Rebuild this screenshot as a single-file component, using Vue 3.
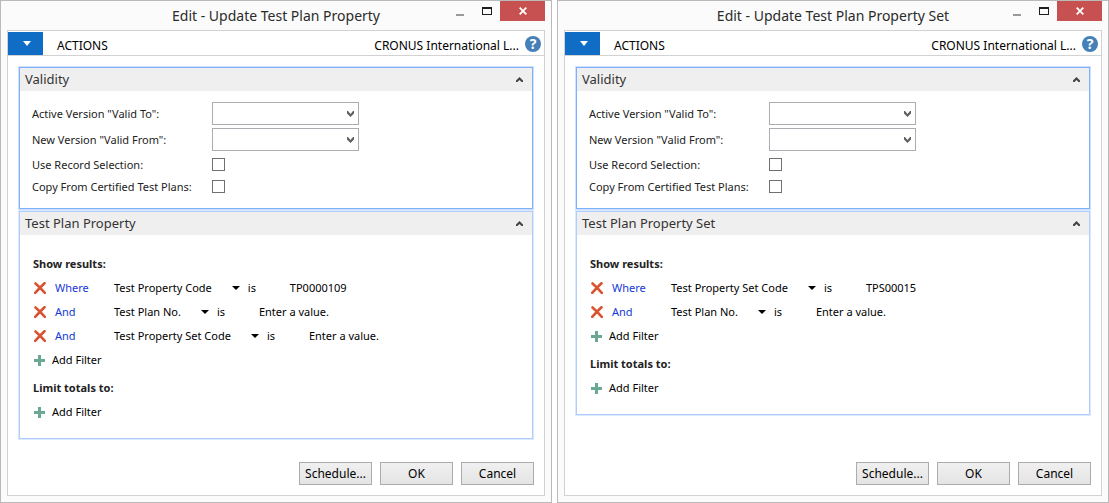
<script setup>
const dialogs = [
  {
    id: 'property',
    title: 'Edit - Update Test Plan Property',
    section: 'Test Plan Property',
    filters: [
      { join: 'Where', field: 'Test Property Code', value: 'TP0000109' },
      { join: 'And', field: 'Test Plan No.', value: 'Enter a value.' },
      { join: 'And', field: 'Test Property Set Code', value: 'Enter a value.' },
    ],
  },
  {
    id: 'set',
    title: 'Edit - Update Test Plan Property Set',
    section: 'Test Plan Property Set',
    filters: [
      { join: 'Where', field: 'Test Property Set Code', value: 'TPS00015' },
      { join: 'And', field: 'Test Plan No.', value: 'Enter a value.' },
    ],
  },
]
const dates = [
  { id: 'to', label: 'Active Version "Valid To":' },
  { id: 'from', label: 'New Version "Valid From":' },
]
const checks = [
  { id: 'record', label: 'Use Record Selection:' },
  { id: 'copy', label: 'Copy From Certified Test Plans:' },
]
const totals = ['Show results:', 'Limit totals to:']
</script>

<template>
  <main class="desktop">
    <section v-for="d in dialogs" :key="d.id" class="window">
      <header class="titlebar">
        <h1 class="title">{{ d.title }}</h1>
        <div class="controls">
          <button class="ctl" type="button" aria-label="Minimize">
            <svg width="8" height="20" viewBox="0 0 8 20"><path d="M0 13h8v2H0z" fill="#999" /></svg>
          </button>
          <button class="ctl" type="button" aria-label="Maximize">
            <svg width="10" height="20" viewBox="0 0 10 20"><path d="M0 6h10v8H0zM1 8v5h8V8z" fill="#1e1e1e" fill-rule="evenodd" /></svg>
          </button>
          <button class="ctl close" type="button" aria-label="Close">
            <svg width="8" height="8" viewBox="0 0 8 8"><path d="M0.7 0.7l6.6 6.6M7.3 0.7L0.7 7.3" stroke="#fff" stroke-width="1.8" /></svg>
          </button>
        </div>
      </header>

      <div class="client">
        <nav class="toolbar">
          <button class="menu" type="button" aria-label="Menu">
            <svg width="8" height="5" viewBox="0 0 8 5"><path d="M0 0h8L4 5z" fill="#fff" /></svg>
          </button>
          <button class="actions" type="button">ACTIONS</button>
          <span class="company">CRONUS International L...</span>
          <button class="help" type="button" aria-label="Help">?</button>
        </nav>

        <div class="panels">
          <section class="panel active">
            <header class="panel-head">
              <h2>Validity</h2>
              <button class="fold" type="button" aria-label="Collapse">
                <svg width="7" height="5" viewBox="0 0 7 5"><path d="M0 3.5L3.5 0L7 3.5V5H5.5L3.5 3L1.5 5H0z" fill="#444" /></svg>
              </button>
            </header>
            <div class="fields">
              <div v-for="f in dates" :key="f.id" class="field">
                <label :for="d.id + f.id">{{ f.label }}</label>
                <div class="combo">
                  <select :id="d.id + f.id"><option value=""></option></select>
                  <svg class="drop" width="7" height="6" viewBox="0 0 7 6"><path d="M0 0H1L3.5 3L6 0H7V2.5L3.5 6L0 2.5z" fill="#606060" /></svg>
                </div>
              </div>
              <div class="checks">
                <div v-for="f in checks" :key="f.id" class="field check">
                  <label :for="d.id + f.id">{{ f.label }}</label>
                  <input :id="d.id + f.id" type="checkbox" />
                </div>
              </div>
            </div>
          </section>

          <section class="panel">
            <header class="panel-head">
              <h2>{{ d.section }}</h2>
              <button class="fold" type="button" aria-label="Collapse">
                <svg width="7" height="5" viewBox="0 0 7 5"><path d="M0 3.5L3.5 0L7 3.5V5H5.5L3.5 3L1.5 5H0z" fill="#444" /></svg>
              </button>
            </header>
            <div class="filters">
              <div v-for="(t, i) in totals" :key="t" class="group">
                <h3>{{ t }}</h3>
                <template v-if="i === 0">
                  <div v-for="f in d.filters" :key="f.field" class="filter">
                    <button class="remove" type="button" aria-label="Remove filter">
                      <svg width="12" height="12" viewBox="0 0 12 12"><path d="M1.5 1.5Q5.5 5 10.8 10.8M10.5 1.2Q6 5.5 1.2 10.8" fill="none" stroke="#d8532f" stroke-width="2.6" stroke-linecap="round" /></svg>
                    </button>
                    <a class="join" href="#">{{ f.join }}</a>
                    <button class="name" type="button">
                      {{ f.field }}
                      <svg width="8" height="4" viewBox="0 0 8 4"><path d="M0 0h8L4 4z" fill="#000" /></svg>
                    </button>
                    <span class="is">is</span>
                    <span>{{ f.value }}</span>
                  </div>
                </template>
                <button class="add" type="button">
                  <svg width="11" height="11" viewBox="0 0 11 11"><path d="M4 0h3v4h4v3H7v4H4V7H0V4h4z" fill="#6aa893" /></svg>
                  Add Filter
                </button>
              </div>
            </div>
          </section>
        </div>

        <footer class="footer">
          <button type="button">Schedule...</button>
          <button type="button">OK</button>
          <button type="button">Cancel</button>
        </footer>
      </div>
    </section>
  </main>
</template>

<style>
body {
  background: #fff;
}
</style>

<style scoped>
* {
  box-sizing: border-box;
}
.desktop {
  display: flex;
  gap: 5px;
  min-height: 100vh;
  font: 12px/16px "Noto Sans", "Open Sans", sans-serif;
  color: #000;
}
button {
  margin: 0;
  padding: 0;
  border: 0;
  background: none;
  color: inherit;
  font: inherit;
}
svg {
  display: block;
}
h1,
h2,
h3 {
  margin: 0;
  font-weight: 400;
}
.window {
  flex: 1;
  min-width: 0;
  display: flex;
  flex-direction: column;
  padding: 0 6px 6px;
  border: 1px solid #bababa;
  background: #fbfbfb;
}
.titlebar {
  display: grid;
  grid-template-columns: 1fr auto 1fr;
  height: 29px;
}
.title {
  grid-column: 2;
  font-size: 14px;
  line-height: 29px;
  color: #2b2b2b;
  white-space: nowrap;
}
.controls {
  display: flex;
  justify-content: flex-end;
  align-items: flex-start;
}
.ctl {
  margin-right: 18px;
}
.ctl:nth-child(2) {
  margin-right: 8px;
}
.ctl.close {
  display: grid;
  place-items: center;
  width: 45px;
  height: 20px;
  margin-right: 0;
  background: #c75050;
}
.client {
  flex: 1;
  display: flex;
  flex-direction: column;
  border: 1px solid #d2d2d2;
  background: #fff;
}
.toolbar {
  display: flex;
  align-items: center;
  height: 25px;
  padding-right: 3px;
  border-bottom: 1px solid #d2d2d2;
}
.menu {
  display: grid;
  place-items: center;
  align-self: flex-end;
  width: 35px;
  height: 23px;
  padding-left: 2px;
  background: #0f6dc6;
}
.actions {
  margin-left: 14px;
  padding-top: 5px;
}
.company {
  margin-left: auto;
  padding-top: 5px;
}
.help {
  width: 16px;
  height: 16px;
  margin: 2px 0 0 6px;
  border-radius: 50%;
  background: #4680b8;
  color: #fff;
  font-size: 14px;
  font-weight: 700;
  line-height: 16px;
}
.panels {
  display: flex;
  flex-direction: column;
  gap: 2px;
  padding: 11px 11px 0;
}
.panel {
  border: 1px solid #b0cefb;
  box-shadow: 0 0 0 1px #dbe8fd;
}
.panel.active {
  border-color: #7db1fb;
  box-shadow: 0 0 0 1px #cfe1fd;
}
.panel-head {
  display: flex;
  justify-content: space-between;
  align-items: center;
  height: 23px;
  padding: 0 9px 0 5px;
  background: #efefef;
}
.panel-head h2 {
  font-size: 13px;
  line-height: 23px;
  color: #333;
}
.fields {
  display: flex;
  flex-direction: column;
  gap: 3px;
  padding: 11px 12px 12px;
  font-size: 11px;
}
.field {
  display: grid;
  grid-template-columns: 180px 1fr;
  align-items: center;
  height: 23px;
  color: #222;
}
.combo {
  position: relative;
  width: 147px;
}
.combo select {
  display: block;
  width: 100%;
  height: 23px;
  border: 1px solid #abadb3;
  border-radius: 0;
  background: #fff;
  appearance: none;
}
.drop {
  position: absolute;
  right: 5px;
  top: 9px;
  pointer-events: none;
}
.checks {
  display: flex;
  flex-direction: column;
  gap: 3px;
  padding-top: 1px;
}
.check {
  height: 19px;
}
.check input {
  width: 13px;
  height: 13px;
  margin: 0;
  border: 1px solid #707070;
  background: #fff;
  appearance: none;
}
.filters {
  display: flex;
  flex-direction: column;
  gap: 4px;
  padding: 17px 13px 14px;
  font-size: 11px;
}
.group h3 {
  font-size: 11px;
  font-weight: 700;
  line-height: 24px;
  color: #222;
}
.filter {
  display: flex;
  align-items: center;
  height: 24px;
}
.remove {
  width: 22px;
  padding-left: 1px;
}
.join {
  width: 59px;
  color: #1438d8;
  text-decoration: none;
}
.name {
  display: flex;
  align-items: center;
  gap: 20px;
}
.is {
  width: 42px;
  margin-left: 8px;
}
.add {
  display: flex;
  align-items: center;
  gap: 7px;
  height: 24px;
  padding-left: 1px;
}
.footer {
  display: flex;
  justify-content: flex-end;
  gap: 8px;
  margin-top: auto;
  padding: 10px;
}
.footer button {
  width: 73px;
  height: 23px;
  border: 1px solid #acacac;
  background: linear-gradient(#f0f0f0, #e4e4e4);
}
</style>
